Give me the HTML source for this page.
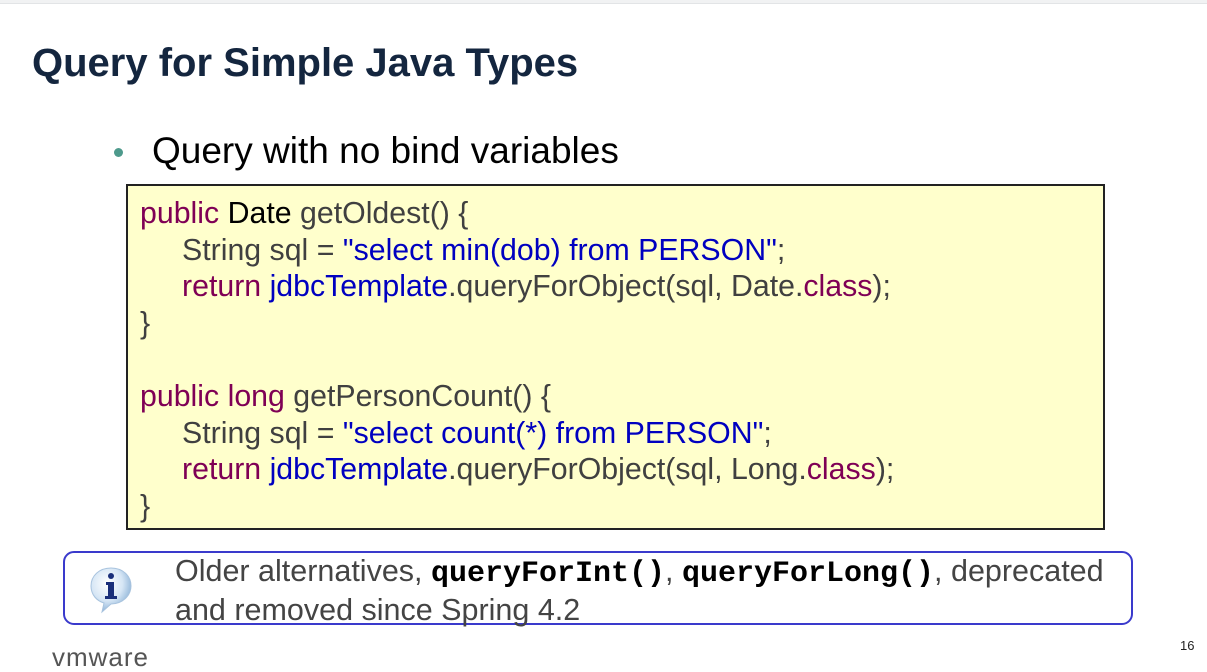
<!DOCTYPE html>
<html><head><meta charset="utf-8"><style>
*{margin:0;padding:0;box-sizing:border-box}
body{width:1207px;height:650px;overflow:hidden;background:#fff;font-family:"Liberation Sans",sans-serif;position:relative}
.topbar{position:absolute;left:0;top:0;width:1207px;height:4px;background:#f1f2f3;border-bottom:1px solid #e2e4e6}
.title{position:absolute;left:32px;top:41px;font-size:40px;font-weight:bold;color:#14263f;white-space:nowrap}
.bullet{position:absolute;left:114px;top:130px;font-size:37px;color:#000;white-space:nowrap}
.bullet .dot{position:absolute;left:0;top:18px;width:9px;height:9px;border-radius:50%;background:#4e9a8c}
.bullet span.t{position:absolute;left:38px;top:0}
.code{position:absolute;left:126px;top:184px;width:979px;height:346px;background:#ffffcc;border:2px solid #222;font-size:30.3px;color:#404040;padding:10px 0 0 12px;line-height:36.6px;white-space:pre}
.i{display:inline-block;width:42px}
.k{color:#7f0055}.b{color:#0000c0}.d{color:#000}
.info{position:absolute;left:63px;top:551px;width:1070px;height:74px;border:2px solid #3a3acc;border-radius:11px}
.info .txt{position:absolute;left:110px;top:0px;font-size:30.5px;line-height:36px;color:#444;white-space:nowrap}
.info b{font-family:"Liberation Mono",monospace;color:#000;font-size:30px}
.icon{position:absolute;left:24px;top:13px}
.pg{position:absolute;left:1180px;top:638px;font-size:13px;color:#222}
.logo{position:absolute;left:52px;top:642px;font-size:26px;color:#555;letter-spacing:1px;line-height:30px}
</style></head><body>
<div class="topbar"></div>
<div class="title">Query for Simple Java Types</div>
<div class="bullet"><div class="dot"></div><span class="t">Query with no bind variables</span></div>
<div class="code"><span class="k">public</span> <span class="d">Date</span> getOldest() {
<span class="i"></span>String sql = <span class="b">"select min(dob) from PERSON"</span>;
<span class="i"></span><span class="k">return</span> <span class="b">jdbcTemplate</span>.queryForObject(sql, Date.<span class="k">class</span>);
}

<span class="k">public</span> <span class="k">long</span> getPersonCount() {
<span class="i"></span>String sql = <span class="b">"select count(*) from PERSON"</span>;
<span class="i"></span><span class="k">return</span> <span class="b">jdbcTemplate</span>.queryForObject(sql, Long.<span class="k">class</span>);
}</div>
<div class="info">
<svg class="icon" width="44" height="48" viewBox="0 0 44 48"><defs><radialGradient id="g" cx="40%" cy="35%" r="65%"><stop offset="0" stop-color="#ffffff"/><stop offset="0.6" stop-color="#d6e6f5"/><stop offset="1" stop-color="#8fb4d8"/></radialGradient></defs><path d="M22 2C10 2 2 10 2 20c0 9 6 15 13 17l-2 9 9-8c11 0 20-8 20-18C42 10 34 2 22 2z" fill="url(#g)" stroke="#a8c3de" stroke-width="1"/><circle cx="22" cy="10" r="3" fill="#1a2f7a"/><path d="M17 16h8v14h3v3H16v-3h3V19h-2z" fill="#1a2f7a"/></svg>
<div class="txt">Older alternatives, <b>queryForInt()</b>, <b>queryForLong()</b>, deprecated<br>and removed since Spring 4.2</div>
</div>
<div class="logo">vmware</div>
<div class="pg">16</div>
</body></html>
